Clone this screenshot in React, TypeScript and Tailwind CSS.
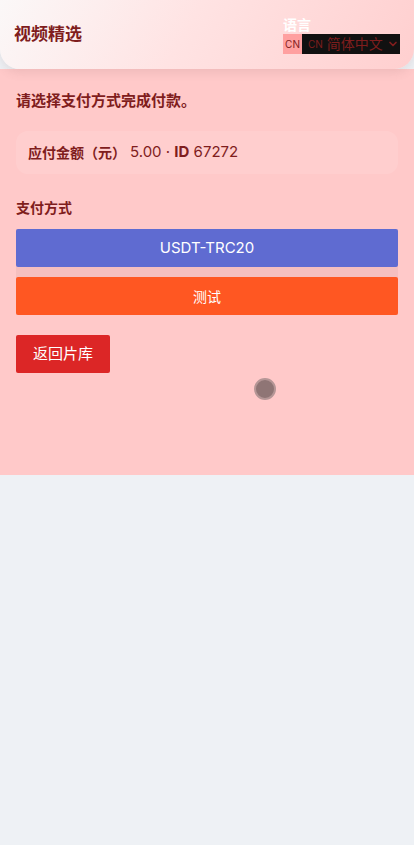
import { ChevronDown } from "lucide-react";

const font = "font-['Inter','Noto_Sans_CJK_SC',sans-serif]";

function Header() {
  return (
    <header className="relative z-10 flex h-[69px] items-center justify-between rounded-b-[20px] bg-[linear-gradient(120deg,#fbf8f8_0%,#ffe3e3_45%,#ffcfcf_100%)] pl-[14px] pr-[14px] shadow-[0_4px_10px_rgba(120,80,80,0.12)]">
      <h1 className="text-[17px] font-bold text-[#7f1d1d]">视频精选</h1>
      <div className="flex flex-col pt-[1px]">
        <span className="text-[14px] font-bold leading-[18px] text-white">语言</span>
        <div className="flex h-[20px] items-center whitespace-nowrap">
          <span className="flex h-full w-[19px] items-center justify-center bg-[#ffa0a0] text-[10px] text-[#7f1d1d]">CN</span>
          <div className="flex h-full w-[98px] items-center bg-[#111111] pl-[6px] text-[#7f1d1d]">
            <span className="text-[10px]">CN</span>
            <span className="ml-[4px] text-[14px] leading-none">简体中文</span>
            <ChevronDown size={12} strokeWidth={3.5} className="ml-[4px]" />
          </div>
        </div>
      </div>
    </header>
  );
}

export default function App() {
  return (
    <div className={`min-h-[845px] bg-[#eef1f5] ${font}`}>
      <Header />
      <main className="relative h-[406px] bg-[#ffc9c9] px-4 pt-5">
        <p className="text-[15px] font-bold leading-6 text-[#7f1d1d]">请选择支付方式完成付款。</p>

        <div className="mt-[18px] flex h-[43px] items-center rounded-xl bg-white/10 px-3 text-[#7f1d1d]">
          <span className="text-[14px] font-bold">应付金额（元）</span>
          <span className="ml-[4px] text-[15px]">
            5.00 · <b className="font-bold">ID</b> 67272
          </span>
        </div>

        <h2 className="mt-[24px] text-[14px] font-bold leading-5 text-[#7f1d1d]">支付方式</h2>

        <div className="mt-[11px] flex flex-col gap-[10px] bg-[#f5bfbf]">
          <button className="h-[38px] rounded-[2px] bg-[#5f6bd1] text-[15px] font-normal text-white">
            USDT-TRC20
          </button>
          <button className="h-[38px] rounded-[2px] bg-[#ff5722] text-[14px] font-normal text-white">
            测试
          </button>
        </div>

        <button className="mt-5 h-[38px] w-[94px] rounded-[2px] bg-[#dc2626] text-[15px] text-white">
          返回片库
        </button>

        <div className="absolute left-[254px] top-[309px] h-[22px] w-[22px] rounded-full border-[2px] border-[#b59696] bg-[#8f7575]" />
      </main>
    </div>
  );
}
